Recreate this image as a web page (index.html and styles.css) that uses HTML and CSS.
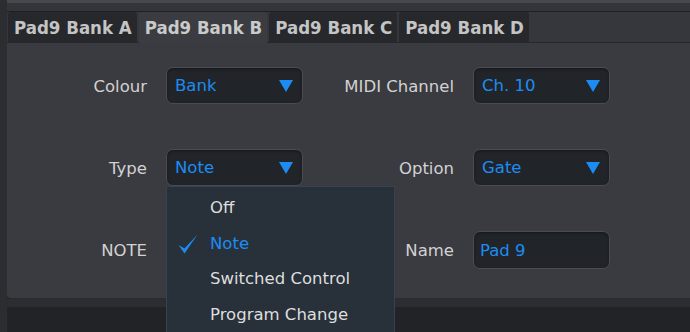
FILE: index.html
```html
<!DOCTYPE html>
<html>
<head>
	<meta charset="utf-8">
	<title>Pad9 settings</title>
	<link rel="stylesheet" href="styles.css">
</head>
<body>
<div class="window">
	<div class="side"></div>
	<div class="main">
		<div class="topline"></div>
		<div class="band"></div>
		<div class="tabs">
			<div class="tab">Pad9 Bank A</div>
			<div class="tab active">Pad9 Bank B</div>
			<div class="tab">Pad9 Bank C</div>
			<div class="tab">Pad9 Bank D</div>
		</div>
		<div class="panel">
			<div class="label">Colour</div>
			<div class="select">Bank<svg class="arrow" width="14" height="12" viewBox="0 0 14 12"><polygon points="0,0 14,0 7,12"/></svg></div>
			<div class="label">MIDI Channel</div>
			<div class="select">Ch. 10<svg class="arrow" width="14" height="12" viewBox="0 0 14 12"><polygon points="0,0 14,0 7,12"/></svg></div>

			<div class="label">Type</div>
			<div class="select open">Note<svg class="arrow" width="14" height="12" viewBox="0 0 14 12"><polygon points="0,0 14,0 7,12"/></svg>
				<ul class="menu">
					<li>Off</li>
					<li class="checked"><svg class="check" width="20" height="20" viewBox="0 0 20 20"><path d="M0.5 11 L6.5 19.5 L19.5 0.5 L6.5 14.5 Z"/></svg>Note</li>
					<li>Switched Control</li>
					<li>Program Change</li>
				</ul>
			</div>
			<div class="label">Option</div>
			<div class="select">Gate<svg class="arrow" width="14" height="12" viewBox="0 0 14 12"><polygon points="0,0 14,0 7,12"/></svg></div>

			<div class="label">NOTE</div>
			<div></div>
			<div class="label">Name</div>
			<div class="select field">Pad 9</div>
		</div>
		<div class="footband"></div>
	</div>
</div>
</body>
</html>
```

FILE: styles.css
```css
body {
	margin: 0;
	background: #222327;
	font-family: "DejaVu Sans", sans-serif;
	overflow: hidden;
}

.window {
	display: flex;
	width: 690px;
	height: 332px;
	overflow: hidden;
}

.side {
	width: 7px;
	background: #2b2d31;
}

.main {
	flex: 1;
	display: flex;
	flex-direction: column;
}

.topline {
	height: 3px;
	background: #47494e;
}

.band {
	height: 8px;
	background: #33353a;
	border-bottom: 1px solid #1f2023;
}

.tabs {
	display: flex;
	gap: 2px;
	height: 30px;
	padding-left: 1px;
	background: #35373c;
	border-bottom: 1px solid #26272b;
}

.tab {
	padding: 0 5px 0 6px;
	height: 31px;
	line-height: 32px;
	background: #26282c;
	color: #c4c4c4;
	font-family: "DejaVu Sans Condensed", "DejaVu Sans", sans-serif;
	font-stretch: condensed;
	font-weight: bold;
	font-size: 18.5px;
	border-radius: 3px 3px 0 0;
}

.tab.active {
	background: #3b3c41;
	color: #cacaca;
	position: relative;
	z-index: 1;
}

.panel {
	height: 231px;
	padding-top: 24px;
	background: #3a3b40;
	border-bottom: 1px solid #2a2b2f;
	border-bottom-left-radius: 4px;
	display: grid;
	grid-template-columns: 140px 137px 132px 137px;
	grid-template-rows: 37px 37px 38px;
	column-gap: 19px;
	row-gap: 45px;
	align-content: start;
}

.footband {
	height: 8px;
	background: #2c2d31;
}

.label {
	text-align: right;
	align-self: center;
	padding-top: 1px;
	color: #d2d2d2;
	font-size: 16.5px;
}

.select {
	position: relative;
	display: flex;
	align-items: center;
	justify-content: space-between;
	padding: 0 9px 0 8px;
	background: #212529;
	border: 1px solid #4a4c51;
	border-radius: 7px;
	color: #1d8cf2;
	font-size: 16.5px;
	box-shadow: inset 0 1px 3px rgba(0, 0, 0, 0.4);
}

.select.field {
	justify-content: flex-start;
	padding-left: 6px;
}

.arrow {
	fill: #1d8cf2;
}

.menu {
	position: absolute;
	top: 36px;
	left: -1px;
	width: 227px;
	height: 160px;
	margin: 0;
	padding: 3px 0 0 0;
	list-style: none;
	background: #28313a;
	border: 1px solid #374250;
	z-index: 2;
}

.menu li {
	position: relative;
	height: 35.6px;
	line-height: 35.6px;
	padding-left: 43px;
	color: #dedede;
	font-size: 16.5px;
}

.menu li.checked {
	color: #1d8cf2;
}

.check {
	position: absolute;
	left: 11px;
	top: 8px;
	fill: #1d8cf2;
}
```
